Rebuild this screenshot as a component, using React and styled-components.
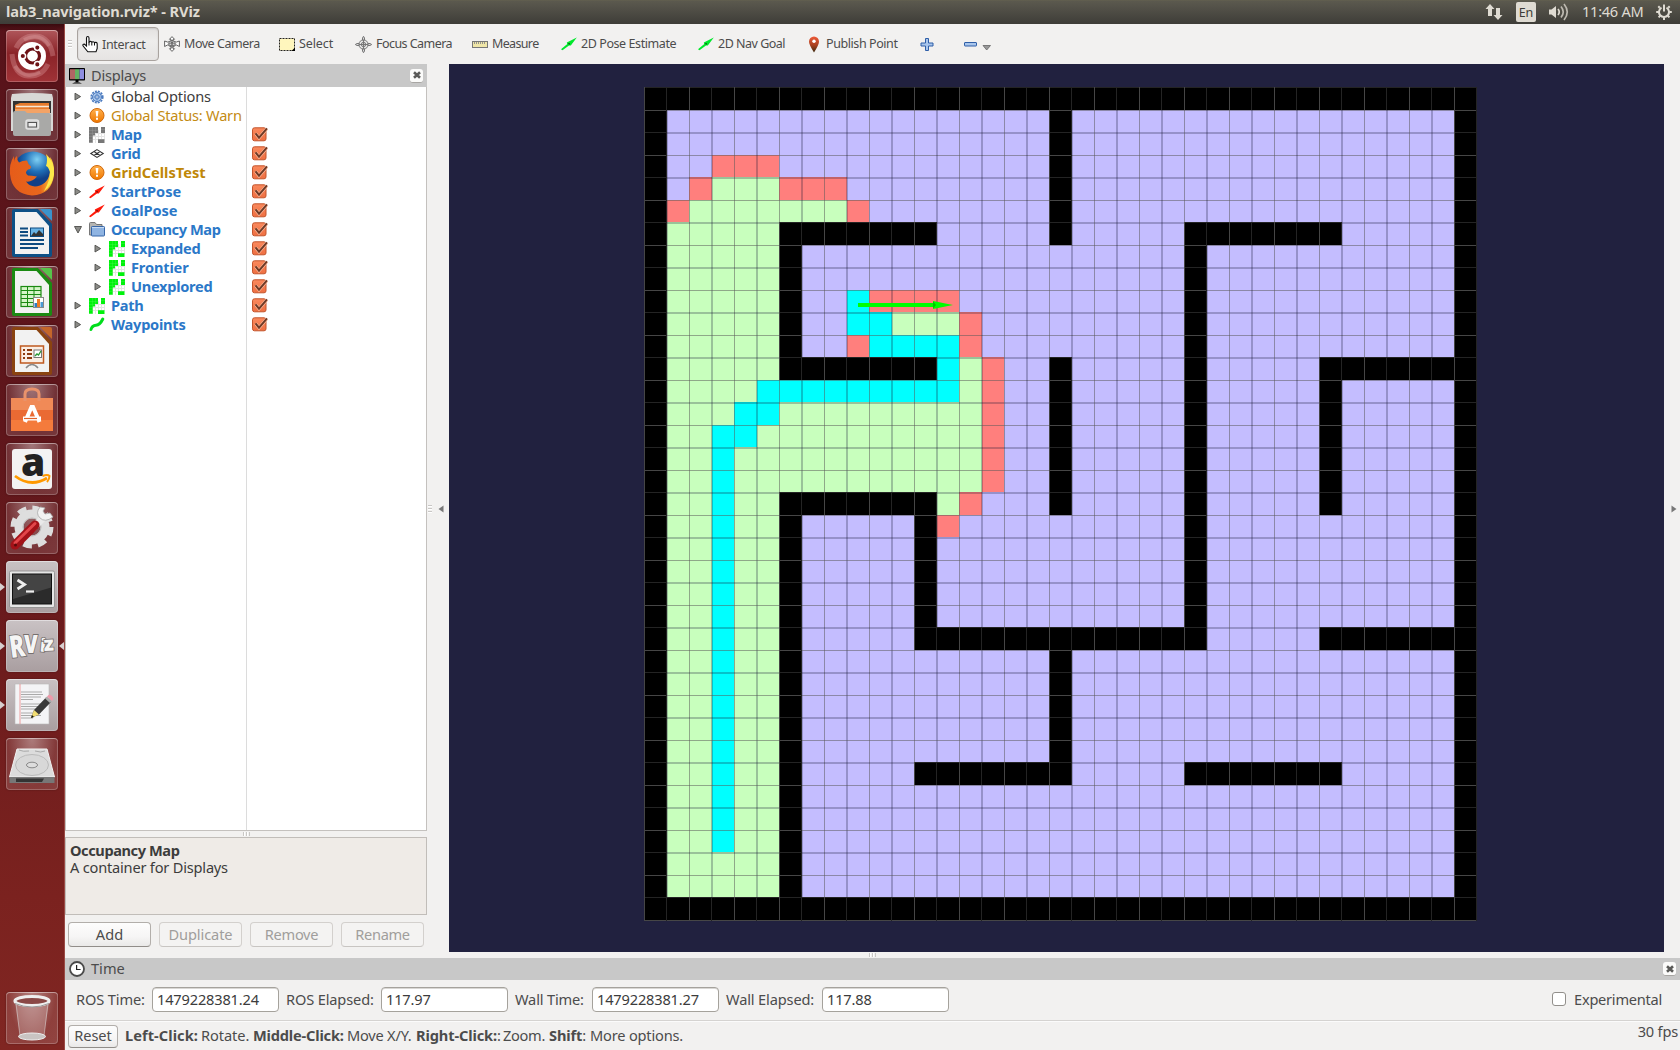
import React from "react";
import styled, { createGlobalStyle } from "styled-components";

const Global = createGlobalStyle`
  *{box-sizing:border-box}
  html,body{margin:0;padding:0;overflow:hidden}
  body{font-family:"Noto Sans","Open Sans",sans-serif;font-size:14.6px;color:#4c4c4c;background:#f2f1f0}
  svg{display:block;flex:none;overflow:visible}
`;

const Screen = styled.div`
  width:1680px;height:1050px;display:flex;flex-direction:column;overflow:hidden;
`;
const T = styled.span`
  display:block;white-space:pre;line-height:${(p) => p.$lh || 19}px;
  font-size:${(p) => p.$size || 14.6}px;
  font-weight:${(p) => (p.$bold ? 700 : 400)};
  letter-spacing:${(p) => p.$ls || 0}px;
  color:${(p) => p.$color || "#4c4c4c"};
  padding-bottom:${(p) => p.$lift || 0}px;
`;

/* ---------- top panel ---------- */
const TopPanel = styled.header`
  height:24px;flex:none;display:flex;align-items:center;justify-content:space-between;
  padding:0 7px 0 6px;
  background:linear-gradient(#65624f 0,#5b594e 1px,#55534a 6px,#3e3d38 100%);
`;
const Indicators = styled.div`display:flex;align-items:center;height:24px;`;
const Lang = styled.div`
  width:20px;height:20px;border-radius:2px;background:#dfdbd2;margin:0 12px 0 13px;
  display:flex;align-items:center;justify-content:center;
`;
const ClockText = styled.div`width:86px;padding-left:13px;`;
const Main = styled.div`flex:1;display:flex;min-height:0;`;

/* ---------- launcher ---------- */
const Launcher = styled.nav`
  width:65px;flex:none;padding:6px 0 6px 0;display:flex;flex-direction:column;gap:7px;
  background:linear-gradient(#3a0a0e 0,#58131a 7px,#5f161b 40%,#7b221f 85%,#802622 100%);
  border-right:1px solid #9a4a45;
`;
const Slot = styled.div`
  height:52px;flex:none;display:flex;align-items:center;
  margin-top:${(p) => (p.$last ? "auto" : "0")};
`;
const Arrow = styled.span`
  width:6px;height:0;flex:none;border-top:4px solid transparent;border-bottom:4px solid transparent;
  border-left:${(p) => (p.$show && !p.$right ? "5px solid #d8cfcf" : "0")};
  border-right:${(p) => (p.$show && p.$right ? "5px solid #d8cfcf" : "0")};
`;
const Tile = styled.div`
  width:52px;height:52px;border-radius:4px;
  background:${(p) =>
    p.$kind === "active"
      ? "linear-gradient(#c9c2c4,#a99ea0)"
      : p.$kind === "dash"
      ? "linear-gradient(#b0575b,#8a2328 45%,#a03337)"
      : "radial-gradient(ellipse at 50% 0,rgba(255,255,255,.42),rgba(255,255,255,.12) 65%,rgba(255,255,255,.14))"};
  box-shadow:inset 0 0 0 1px rgba(255,255,255,.22),inset 0 1px 0 rgba(255,255,255,.3),0 0 2px rgba(0,0,0,.35);
`;

/* ---------- window ---------- */
const Win = styled.main`flex:1;display:flex;flex-direction:column;min-width:0;background:#f2f1f0;`;
const Toolbar = styled.div`height:40px;flex:none;display:flex;align-items:center;padding-left:3px;`;
const Grip = styled.i`
  display:block;flex:none;
  width:${(p) => (p.$v ? 7 : 4)}px;height:${(p) => (p.$v ? 4 : 8)}px;
  background:repeating-linear-gradient(${(p) => (p.$v ? "90deg" : "180deg")},#c9c7c5 0 1px,#fff 1px 2px,transparent 2px 3px);
`;
const Interact = styled.button`
  width:82px;height:34px;margin:0 5px 0 5px;padding:0 0 0 4px;display:flex;align-items:center;gap:3px;
  font:inherit;border:1px solid #a9a39f;border-radius:4px;
  background:linear-gradient(#e3e1e0,#eeedec 40%,#e6e4e3);box-shadow:inset 0 1px 2px rgba(0,0,0,.12);
`;
const Tool = styled.div`width:${(p) => p.$w}px;flex:none;display:flex;align-items:center;gap:4px;`;
const Split = styled.div`height:888px;flex:none;display:flex;`;
const DockCol = styled.aside`width:362px;flex:none;display:flex;flex-direction:column;`;
const DockHead = styled.div`
  height:${(p) => p.$h}px;flex:none;background:#c8c8c8;display:flex;align-items:center;padding:0 4px;gap:6px;
`;
const Close = styled.span`
  margin-left:auto;width:13px;height:14px;border-radius:3px;background:#fbfbfa;
  border-bottom:1px solid #a8a6a3;display:flex;align-items:center;justify-content:center;
`;
const Tree = styled.div`
  height:744px;flex:none;background:#fff;border:1px solid #c4c1be;border-top:0;display:flex;
`;
const TreeNames = styled.div`width:181px;border-right:1px solid #dcdcdc;`;
const TreeRow = styled.div`
  height:19px;display:flex;align-items:center;padding-left:${(p) => 8 + (p.$depth || 0) * 20}px;
`;
const Expander = styled.span`width:15px;display:flex;`;
const IconBox = styled.span`width:16px;margin-right:6px;display:flex;justify-content:center;`;
const CheckCell = styled.div`height:19px;padding:0 0 0 5px;display:flex;align-items:center;`;
const HGrip = styled.div`height:6px;flex:none;display:flex;align-items:center;justify-content:center;`;
const Desc = styled.div`
  height:78px;flex:none;border:1px solid #c1bdb9;background:#efebe7;padding:4px 0 0 4px;
`;
const BtnRow = styled.div`display:flex;gap:8px;padding:7px 0 0 3px;`;
const Btn = styled.button`
  width:${(p) => p.$w}px;height:${(p) => p.$h || 25}px;padding:0;font:inherit;display:flex;align-items:center;justify-content:center;
  border:1px solid ${(p) => (p.disabled ? "#d3d0cd" : "#b2aeaa")};
  border-bottom-color:${(p) => (p.disabled ? "#c8c5c2" : "#918d89")};
  border-radius:4px;
  background:${(p) => (p.disabled ? "#f4f3f2" : "linear-gradient(#fdfdfd,#f6f5f5 60%,#eae9e8)")};
`;
const Handle = styled.div`width:22px;flex:none;display:flex;align-items:center;padding:1px 0 0 1px;gap:6px;`;
const RightHandle = styled.div`flex:1;display:flex;align-items:center;padding:1px 0 0 7px;`;
const Viewport = styled.div`width:1215px;height:888px;flex:none;background:#21213f;`;
const TimeBody = styled.div`
  height:41px;flex:none;display:flex;align-items:center;padding:0 18px 2px 11px;border-bottom:1px solid #d5d3d1;
`;
const Lab = styled.div`width:${(p) => p.$w}px;flex:none;`;
const Field = styled.div`
  width:127px;height:25px;flex:none;margin-right:7px;border:1px solid #a5a29c;border-radius:4px;background:#fff;
  display:flex;align-items:center;padding-left:4px;box-shadow:inset 0 1px 0 #d9d7d4;
`;
const Box = styled.span`
  width:14px;height:14px;border:1px solid #928f8b;border-radius:3px;background:#fff;margin:0 8px 0 auto;
`;
const Status = styled.footer`
  flex:1;display:flex;align-items:center;padding:0 2px 0 3px;border-top:1px solid #fbfbfb;
`;
const Hints = styled.div`display:flex;margin-left:7px;`;
const Fps = styled.div`margin-left:auto;align-self:flex-start;`;

/* ---------- small icons ---------- */
const Hand = () => (
  <svg width="17" height="17" viewBox="0 0 17 17">
    <path d="M4.5 10V2q0-1.5 1.2-1.5T7 2v4.5q.3-1.2 1.5-1.1T9.8 6.600q.3-1 1.400-.9t1.300 1.300q.4-.8 1.500-.6t1.200 1.300v4.800L14 15.800H5.800L1 9.800q-.4-1.300.6-1.600t1.700.8z" fill="#fff" stroke="#111" strokeWidth="1.100" />
    <path d="M7 6v3.500M9.800 6.500v3M12.500 7v2.500" stroke="#111" />
  </svg>
);
const MoveCam = () => (
  <svg width="16" height="16" viewBox="0 0 16 16" fill="#fff" stroke="#555" strokeWidth=".9">
    <path d="M8 .6 5.500 3.300H7v2H9v-2h1.500zM8 15.400l2.500-2.700H9v-2H7v2H5.500zM.6 5v5.500L3.500 9l2 .3M15.400 5v5.500L12.500 9l-2 .3M.6 5l3 1 2.500-.5M15.400 5l-3 1L10 5.500" />
    <circle cx="8" cy="7.800" r="3.300" /><path d="M5 7.800h6M8 4.500v6.500M6 5.800q2 1.500 4 0M6 9.800q2-1.500 4 0" />
  </svg>
);
const SelectIcon = () => (
  <svg width="16" height="13" viewBox="0 0 16 13">
    <rect x=".5" y=".5" width="15" height="12" fill="#fff6bd" stroke="#222" strokeDasharray="2 1" />
    <path d="M16 9.500V13H12.500z" fill="#000" />
  </svg>
);
const FocusIcon = () => (
  <svg width="17" height="17" viewBox="0 0 17 17" fill="none" stroke="#777" strokeWidth="1">
    <circle cx="8.500" cy="8.500" r="4.600" fill="#e4e4e4" /><circle cx="8.500" cy="8.500" r="2.200" />
    <path d="M8.500 3v11M3 8.500h11" />
    <path d="M7.500 4V2L8.500.3 9.500 2v2zM7.500 13v2l1 1.700 1-1.700v-2zM4 7.500H2L.3 8.500 2 9.500h2zM13 7.500h2l1.700 1-1.700 1h-2z" fill="#ddd" />
  </svg>
);
const Ruler = () => (
  <svg width="16" height="7" viewBox="0 0 16 7">
    <rect x=".5" y=".5" width="15" height="6" fill="#efe6a8" stroke="#777" />
    <path d="M2.500 1v2M4.500 1v2M6.500 1v2M8.500 1v2M10.500 1v2M12.500 1v2" stroke="#888" strokeWidth=".9" />
  </svg>
);
const Pose = ({ c = "#00e82b", d = "#0a5c14" }) => (
  <svg width="16" height="14" viewBox="0 0 16 14">
    <path d="M0 12.200 6.300 7 5.800 5.500 15.800.5 9.800 8.600 8 8.500 1.500 13.200z" fill={c} />
    <path d="M6.500 6.500 9 6 8.500 8z" fill={d} />
  </svg>
);
const Pin = () => (
  <svg width="16" height="17" viewBox="0 0 16 17">
    <defs><linearGradient id="pin" x2="0" y2="1"><stop offset="0" stopColor="#ee5a38" /><stop offset=".55" stopColor="#a8401f" /><stop offset="1" stopColor="#3a2a10" /></linearGradient></defs>
    <path d="M8 .5a5 5 0 0 1 5 5.200Q13 8.500 8 16.500 3 8.500 3 5.700A5 5 0 0 1 8 .5z" fill="url(#pin)" /><circle cx="8" cy="5.300" r="1.700" fill="#fff" />
  </svg>
);
const Plus = () => (
  <svg width="14" height="13" viewBox="0 0 14 13">
    <path d="M5.500.5h3v4.500h4.500v3H8.500v4.500h-3V8H1V5h4.500z" fill="#a9c6ec" stroke="#2f5fa8" />
  </svg>
);
const Minus = () => (
  <svg width="13" height="5" viewBox="0 0 13 5"><rect x=".5" y=".5" width="12" height="3.500" rx=".5" fill="#a9c6ec" stroke="#2f5fa8" /></svg>
);
const Monitor = () => (
  <svg width="16" height="16" viewBox="0 0 16 16">
    <rect width="16" height="12.500" rx=".8" fill="#000" />
    <rect x="1" y="1.200" width="5" height="10" fill="#b06464" /><rect x="6" y="1.200" width="4.500" height="10" fill="#63b063" /><rect x="10.500" y="1.200" width="4.500" height="10" fill="#8e8ee0" />
    <path d="M6.500 12h3v2h-3z" /><path d="M3 15.400q5-2.400 10 0z" />
  </svg>
);
const Clock = () => (
  <svg width="16" height="16" viewBox="0 0 16 16">
    <circle cx="8" cy="8" r="7" fill="#fff" stroke="#4a4a4a" strokeWidth="1.800" /><path d="M7.600 4v4.500h4" fill="none" stroke="#222" strokeWidth="1.200" />
  </svg>
);
const Cross = () => (
  <svg width="8" height="8" viewBox="0 0 8 8"><path d="M1 1.200 7 6.800M7 1.200 1 6.800" stroke="#5a5a58" strokeWidth="2.600" /></svg>
);
const Gear = () => (
  <svg width="14" height="14" viewBox="0 0 14 14" fill="none">
    <circle cx="7" cy="7" r="5.700" stroke="#4a7abf" strokeWidth="1.800" strokeDasharray="2 1" />
    <circle cx="7" cy="7" r="4.500" fill="#a6c4ea" stroke="#4a7abf" /><circle cx="7" cy="7" r="2" fill="#fff" stroke="#4a7abf" /><path d="M7 3.500v7M3.500 7h7" stroke="#4a7abf" strokeWidth=".6" />
  </svg>
);
const Warn = () => (
  <svg width="16" height="16" viewBox="0 0 16 16">
    <defs><linearGradient id="wn" x2="0" y2="1"><stop offset="0" stopColor="#ffb04d" /><stop offset="1" stopColor="#f07800" /></linearGradient></defs>
    <circle cx="8" cy="7.500" r="7" fill="url(#wn)" stroke="#d2680a" /><path d="M6.600 3h2.800L8.800 8.500H7.200zM7 9.700h2v2H7z" fill="#fff" />
  </svg>
);
const MapIcon = ({ c = "#00f20c", l = "#e4e4e4" }) => (
  <svg width="16" height="16" viewBox="0 0 16 16">
    <path d="M3.500 8v8M6.500 3v13M9.500 3v13M12.500 3v13M3 9.500h13M3 12.500h13M6 6.500h10M15.500 5v8" stroke={l} />
    <path d="M0 0h9v6H6v2.500H3.700v7.300H0zM12 0h4v6h-4zM9 12.200h6.500V16H9z" fill={c} />
    <path d="M3.500 0v8M6.500 0v6M0 3.500h9M0 6.500h6M0 9.500h3M0 12.500h3M12 2.500h4" stroke="#fff" strokeWidth=".3" opacity=".35" />
  </svg>
);
const GridIcon = () => (
  <svg width="14" height="9" viewBox="0 0 14 9" fill="none" stroke="#333" strokeWidth="1.100">
    <path d="M7 .6 13.200 4.500 7 8.400.8 4.500zM3.900 2.500l6.200 3.900M10.100 2.500 3.900 6.400" />
  </svg>
);
const Folder = () => (
  <svg width="16" height="15" viewBox="0 0 16 15">
    <path d="M.5 1.500q0-1 1-1H6l1.500 2h5.500V13H.5z" fill="#b5b5b2" stroke="#777" />
    <rect x="2.500" y="4.500" width="13" height="9.500" rx=".8" fill="#8fb4e2" stroke="#3766a8" /><path d="M3 5.500h12" stroke="#c7dbf3" />
  </svg>
);
const Wave = () => (
  <svg width="16" height="15" viewBox="0 0 16 15"><path d="M2 12.500Q3 8.500 7 8.200T13.800 2" fill="none" stroke="#00dd1c" strokeWidth="3" strokeLinecap="round" /></svg>
);
const Check = () => (
  <svg width="16" height="16" viewBox="0 0 16 16">
    <defs><linearGradient id="ck" x2="0" y2="1"><stop offset="0" stopColor="#fa8a5e" /><stop offset="1" stopColor="#ee6f42" /></linearGradient></defs>
    <rect x=".5" y=".8" width="13.500" height="13" rx="2" fill="url(#ck)" stroke="#c4552c" />
    <path d="M3.500 6.400 7 10.700 14.800 1.800" fill="none" stroke="#ffc0a3" strokeWidth="3.200" /><path d="M3.500 6.400 7 10.700 15 1.400" fill="none" stroke="#6f3a26" strokeWidth="2" />
  </svg>
);
const TriR = ({ open }) => (
  <svg width="8" height="8" viewBox="0 0 8 8">
    <path d={open ? "M.5 .5h7L4 7z" : "M1 .2v6.800L6.600 3.600z"} fill="#8c8c88" stroke="#4d4d4a" strokeWidth=".9" />
  </svg>
);

/* ---------- launcher icons ---------- */
const I = ({ children }) => <svg width="52" height="52" viewBox="0 0 52 52">{children}</svg>;
const Office = ({ a, b, children }) => (
  <>
    <path d="M6 4q0-2 2-2h24L46 17v31q0 2-2 2H8q-2 0-2-2z" fill={a} />
    <path d="M34 2h10q2 0 2 2v10z" fill={b} />
    <path d="M9 5h21.500L43 19v28H9z" fill="#f2f2f2" />
    {children}
  </>
);
const Dash = () => (
  <I>
    <path d="M10 18Q16 5 30 6t17 20M42 34Q36 47 22 46T6 24" fill="none" stroke="#e2a0a2" strokeOpacity=".35" strokeWidth="5" />
    <path d="M18 10Q34 2 43 16M34 42Q18 50 9 36" fill="none" stroke="#f0c0c0" strokeOpacity=".25" strokeWidth="4" />
    <circle cx="26" cy="26" r="14" fill="#fff" />
    <circle cx="26.500" cy="26" r="7" fill="none" stroke="#6d1216" strokeWidth="3.200" />
    <g stroke="#fff" strokeWidth="1.500" fill="#6d1216"><circle cx="16.800" cy="26" r="2.800" /><circle cx="31.300" cy="17.600" r="2.800" /><circle cx="31.300" cy="34.400" r="2.800" /></g>
  </I>
);
const Files = () => (
  <I>
    <path d="M6 5q20-2 40 0l1 4v33H5V9z" fill="#d8d8d6" /><path d="M7 12h38v12H7z" fill="#333" />
    <path d="M9 16l5-2h29v12H9z" fill="#e77a2b" /><path d="M10 17.500h33" stroke="#f7e7d5" strokeWidth="1.500" />
    <path d="M9 20h35v4H9z" fill="#f3a366" />
    <path d="M7 24q0-2 2-2h10l2 2h22q2 0 2 2v19q0 2-2 2H9q-2 0-2-2z" fill="#a9a9a7" />
    <rect x="20" y="31" width="12.500" height="9" rx="2" fill="#ccc" stroke="#e2e2e2" strokeWidth="1.500" /><rect x="22" y="33.500" width="8.500" height="4.500" fill="#eee" stroke="#555" />
  </I>
);
const Firefox = () => (
  <I>
    <defs><radialGradient id="ffb" cx=".6" cy=".2"><stop offset="0" stopColor="#7fd0f3" /><stop offset=".6" stopColor="#1f6fb8" /><stop offset="1" stopColor="#123f86" /></radialGradient>
      <linearGradient id="ffo" x2="1"><stop offset="0" stopColor="#e65c1a" /><stop offset=".7" stopColor="#e8671c" /><stop offset="1" stopColor="#fbd43a" /></linearGradient></defs>
    <circle cx="27" cy="23.500" r="20" fill="url(#ffb)" />
    <path d="M8 8q-5 8-4 18 2 20 22 21.500 20-1 22-21Q48.500 14 44 9q1 6 0 10 1 14-10 18.500-9 3-14-4 6 1 11-5-6-1-9-1-4-3 0-6 3 0 3-3-3-2-4-6-5 0-8 2-2-2-2-6.500-3 2-3 6.500z" fill="url(#ffo)" />
    <path d="M40 6q9 8 8 20-2 12-10 17 6-10 6-19-2-6-4-6 2-6 0-12z" fill="#fce94a" />
  </I>
);
const Writer = () => (
  <I><Office a="#0d5086" b="#3a93cb">
    <path d="M14 21.500h8M14 25h8M14 28.500h8M14 33h24M14 37h24M14 41h18" stroke="#0d4a80" strokeWidth="2" />
    <rect x="24.500" y="21" width="13" height="8.500" fill="#67b2e4" stroke="#0d4a80" /><path d="M25 29l3-4 2 2 3-4 4 4v2z" fill="#333" />
  </Office></I>
);
const Calc = () => (
  <I><Office a="#1b8a12" b="#57c34a">
    <rect x="15" y="20.500" width="20" height="20" fill="#d5f5c8" stroke="#1b8a12" strokeWidth="1.200" />
    <path d="M15 24.500h20M15 28.500h20M15 32.500h20M15 36.500h20M21.500 20v20M28 20v20" stroke="#1b8a12" strokeWidth="1" />
    <rect x="27.500" y="31.500" width="10" height="10" fill="#fff" stroke="#888" /><path d="M28.500 37h2.500v4h-2.500z" fill="#2a7dc1" /><path d="M31 33h3v8h-3z" fill="#ee7b23" /><path d="M34.500 36h2.500v5h-2.500z" fill="#4b9ad5" />
  </Office></I>
);
const Impress = () => (
  <I><Office a="#8a4310" b="#c4662a">
    <rect x="14.500" y="21" width="23" height="17" fill="#fbeee4" stroke="#bf5a20" strokeWidth="1.500" />
    <path d="M17 25h2M17 29h2M17 33h2M21 25h5M21 29h5M21 33h5" stroke="#8f3c10" strokeWidth="2" /><rect x="28" y="25" width="7.500" height="7.500" fill="#fff" stroke="#777" /><path d="M29 31l2-2 1.500 1 2.500-4" stroke="#2d9a36" fill="none" strokeWidth="1.400" /><path d="M20 43q6-7 12 0" stroke="#888" fill="none" strokeWidth="1.500" />
  </Office></I>
);
const Software = () => (
  <I>
    <path d="M5 14h42v33H5z" fill="#ea6a33" /><path d="M5 14h42v12H5z" fill="#f08a57" /><path d="M5 36h42v11H5z" fill="#f47b3c" />
    <path d="M19 17V10q0-5 7-5t7 5v7" fill="none" stroke="#e9926b" strokeWidth="3" />
    <path d="M19 38l6.500-15h1.500L33.500 38M17 34.500h18" fill="none" stroke="#fff" strokeWidth="4" />
    <path d="M18 34.500h13" stroke="#e2622a" strokeWidth="1.200" />
  </I>
);
const Letter = styled.text`
  font-family:"Open Sans","Noto Sans",sans-serif;font-weight:800;
`;
const Amazon = () => (
  <I>
    <rect x="6" y="6" width="40" height="40" rx="3" fill="#f3f3f3" />
    <Letter x="15" y="33" fontSize="39" fill="#222">a</Letter>
    <path d="M9 33q16 12 32 2" fill="none" stroke="#ff9900" strokeWidth="2.800" /><path d="M36.500 33q5-2 7 0 0 3-2.500 6" fill="none" stroke="#ff9900" strokeWidth="2" />
  </I>
);
const Settings = () => (
  <I>
    <circle cx="26" cy="25" r="18.500" fill="none" stroke="#ddd" strokeWidth="6" strokeDasharray="8.500 6" />
    <circle cx="26" cy="25" r="13" fill="none" stroke="#dedede" strokeWidth="9" /><circle cx="26" cy="25" r="9" fill="none" stroke="#bbb" strokeWidth="1" />
    <path d="M26 27 38 15" stroke="#e9e9e9" strokeWidth="7" /><path d="M34 5q-5 6 0 11 5 5 13-1l-3-4-5 1-2-3 2-3z" fill="#f2f2f2" stroke="#aaa" strokeWidth=".8" />
    <path d="M9 43 29 23" stroke="#a31218" strokeWidth="9" strokeLinecap="round" /><path d="M9 41 29 21.500" stroke="#e2464a" strokeWidth="3" strokeLinecap="round" /><circle cx="9.500" cy="43" r="1.500" fill="#5a0a0a" />
  </I>
);
const Terminal = () => (
  <I>
    <rect x="3.500" y="10" width="45" height="36.500" rx="1.500" fill="#e6e6e6" stroke="#888" strokeWidth=".8" /><rect x="6.500" y="13" width="39" height="30" fill="#2b2b2b" stroke="#111" /><path d="M7 13.500h38v13L7 38z" fill="#fff" opacity=".12" />
    <path d="M11.500 19l7 4.500-7 4.500" fill="none" stroke="#eee" strokeWidth="2.800" /><path d="M20 30.500h8" stroke="#eee" strokeWidth="2.200" />
  </I>
);
const Logo = styled.text`
  font-family:"Open Sans","Noto Sans",sans-serif;font-weight:800;fill:#f5f5f5;stroke:#77706f;stroke-width:1.6px;paint-order:stroke;
`;
const RvizIcon = () => (
  <I>
    <g transform="translate(5 38) rotate(-8) scale(.8 1.100)"><Logo fontSize="28">R</Logo></g>
    <g transform="translate(18 33) scale(.9 1.150)"><Logo fontSize="22">V</Logo></g>
    <g transform="translate(33.500 31.500) rotate(5)"><Logo fontSize="18">i</Logo></g>
    <g transform="translate(38 31) rotate(-3)"><Logo fontSize="20">z</Logo></g>
  </I>
);
const Editor = () => (
  <I>
    <path d="M9 5h34v40H9z" fill="#f4f4f6" stroke="#bbb" strokeWidth=".6" /><path d="M14 5v40" stroke="#e88" strokeWidth=".8" />
    <path d="M15 13h21M15 15.500h22M15 18h20M15 20.500h12M15 25h22M15 27.500h20M15 30h16M15 34h14M15 36.500h20M15 39h12" stroke="#aaa" strokeWidth="1" />
    <path d="M25 39 28 31 40 18.500 45 23 33 35.500z" fill="#3a3a3a" /><path d="M25 39l3-8 5 4.500z" fill="#f1dd72" /><path d="M25 39l1-3 2 2z" fill="#111" /><path d="M39 19.500l2-2 5 4.500-2 2z" fill="#aaa" /><path d="M41 17.500l2-1.800q3 0 4.500 4L46 22z" fill="#e9a" />
  </I>
);
const Disk = () => (
  <I>
    <path d="M11 11h30l7.500 28H3.500z" fill="#dcdcdc" stroke="#f2f2f2" /><path d="M3.500 39h45v6H3.500z" fill="#777" /><path d="M10 40.500h28l-2 3.500H10z" fill="#333" />
    <ellipse cx="26" cy="27" rx="16.500" ry="10.500" fill="#d8d8d8" stroke="#bbb" /><ellipse cx="26" cy="27" rx="5.500" ry="2.800" fill="#ddd" stroke="#888" /><path d="M13 12q4 2 10 1M29 13q6 2 10 0" stroke="#aaa" fill="none" />
  </I>
);
const Trash = () => (
  <I>
    <path d="M9 10 14 44q12 6 24 0L43 10z" fill="#fff" opacity=".22" /><path d="M10 11 14 44M42 11 38 44" stroke="#ddd" strokeOpacity=".5" />
    <ellipse cx="26" cy="44.500" rx="13.500" ry="3.500" fill="#c9c4c2" stroke="#eee" />
    <ellipse cx="26" cy="9" rx="17" ry="4.500" fill="#8a4846" stroke="#eee" strokeWidth="3.200" /><path d="M9 11.500q17 7 34 0" fill="none" stroke="#999" strokeWidth="1" />
  </I>
);

const APPS = [
  [Dash, "dash"], [Files], [Firefox], [Writer], [Calc], [Impress], [Software], [Amazon], [Settings],
  [Terminal, "active", true], [RvizIcon, "active", true, true], [Editor, "active", true], [Disk],
];

/* ---------- occupancy map ---------- */
const N = 37;
const gx = (k) => 644 + Math.floor(22.5 * k);
const gy = (k) => 87 + Math.ceil(22.5 * k);
const cx = (k) => (k === N ? gx(k) + 1 : 644 + Math.ceil(22.5 * k));
const cy = (k) => (k === N ? gy(k) + 1 : gy(k));
/* runs are [col, row, width, height] in cells */
const WALLS = [
  [0, 0, 37, 1], [0, 36, 37, 1], [0, 0, 1, 37], [36, 0, 1, 37],
  [6, 6, 7, 1], [6, 6, 1, 7], [6, 12, 7, 1], [18, 1, 1, 6], [18, 12, 1, 7], [18, 25, 1, 6],
  [24, 6, 1, 19], [24, 6, 7, 1], [30, 12, 7, 1], [30, 12, 1, 7], [12, 24, 13, 1], [30, 24, 7, 1],
  [6, 18, 7, 1], [6, 18, 1, 19], [12, 18, 1, 7], [12, 30, 7, 1], [24, 30, 7, 1],
];
const EXPANDED = [
  [3, 4, 3, 1], [2, 5, 7, 1], [1, 6, 5, 30], [6, 13, 9, 5], [14, 12, 1, 1], [13, 18, 1, 1], [11, 10, 3, 1],
];
const FRONTIER = [
  [3, 3, 3, 1], [2, 4, 1, 1], [6, 4, 3, 1], [1, 5, 1, 1], [9, 5, 1, 1], [10, 9, 4, 1], [14, 10, 1, 2],
  [9, 11, 1, 1], [15, 12, 1, 6], [14, 18, 1, 1], [13, 19, 1, 1],
];
const PATH = [
  [9, 9, 1, 1], [9, 10, 2, 1], [10, 11, 4, 1], [13, 12, 1, 1], [5, 13, 9, 1], [4, 14, 2, 1], [3, 15, 2, 1], [3, 16, 1, 18],
];
const Cells = ({ runs, fill }) =>
  runs.map(([c, r, w, h], i) => (
    <rect key={i} x={cx(c)} y={cy(r)} width={cx(c + w) - cx(c)} height={cy(r + h) - cy(r)} fill={fill} />
  ));
const lines = Array.from({ length: N + 1 }, (_, k) => k);
const FAINT = "rgba(20,20,50,.26)";
const FIRM = "rgba(88,88,88,.52)";

const OccupancyMap = () => (
  <svg width="1215" height="888" viewBox="449 64 1215 888" shapeRendering="crispEdges">
    <defs><clipPath id="walls"><Cells runs={WALLS} /></clipPath></defs>
    <rect x={gx(0)} y={gy(0)} width={832} height={833} fill="#c4bdff" />
    <Cells runs={EXPANDED} fill="#c8ffbd" />
    <Cells runs={FRONTIER} fill="#ff7f7d" />
    <Cells runs={PATH} fill="#00ffff" />
    {lines.slice(1, N).map((k) => (
      <g key={k}>
        <rect x={gx(k)} y={gy(0)} width={k % 2 ? 2 : 1} height="833" fill={k % 2 ? FAINT : FIRM} />
        <rect x={gx(0)} y={gy(k)} width="832" height={k % 2 ? 1 : 2} fill={k % 2 ? FIRM : FAINT} />
      </g>
    ))}
    <Cells runs={WALLS} fill="#000" />
    <g clipPath="url(#walls)">
      {lines.map((k) => (
        <rect key={k} x={gx(0)} y={gy(k)} width="833" height="1" fill={k % 2 ? "#464646" : "#242424"} />
      ))}
      {lines.map((k) => (
        <rect key={k} x={gx(k)} y={gy(0)} width="1" height="834" fill={k % 2 ? "#242424" : "#464646"} />
      ))}
    </g>
    <g fill="#00ff00" shapeRendering="auto">
      <rect x="858" y="303" width="76" height="4" />
      <path d="M933 301 953 305 933 309z" />
      <path d="M933 301.500v7l3-3.500z" fill="#00c400" />
    </g>
  </svg>
);

/* ---------- data ---------- */
const BLUE = "#2b78c8";
const ROWS = [
  ["Global Options", Gear, "#3c3c3c", -0.16, 0, false],
  ["Global Status: Warn", Warn, "#c48b14", -0.22, 0, false],
  ["Map", () => <MapIcon c="#777" />, BLUE, -0.4, 0, true],
  ["Grid", GridIcon, BLUE, -0.3, 0, true],
  ["GridCellsTest", Warn, "#c08708", 0, 0, true],
  ["StartPose", () => <Pose c="#ff1a0a" d="#801008" />, BLUE, 0, 0, true],
  ["GoalPose", () => <Pose c="#ff1a0a" d="#801008" />, BLUE, -0.06, 0, true],
  ["Occupancy Map", Folder, BLUE, -0.42, 0, true],
  ["Expanded", MapIcon, BLUE, -0.22, 1, true],
  ["Frontier", MapIcon, BLUE, -0.16, 1, true],
  ["Unexplored", MapIcon, BLUE, -0.28, 1, true],
  ["Path", MapIcon, BLUE, -0.3, 0, true],
  ["Waypoints", Wave, BLUE, -0.25, 0, true],
];
const TOOLS = [
  ["Move Camera", MoveCam, 115, -0.46], ["Select", SelectIcon, 76, -0.1], ["Focus Camera", FocusIcon, 117, -0.55],
  ["Measure", Ruler, 89, -0.65], ["2D Pose Estimate", Pose, 137, -0.42], ["2D Nav Goal", Pose, 108, -0.5],
  ["Publish Point", Pin, 114, -0.42],
];
const TIMES = [
  ["ROS Time:", 76, "1479228381.24", -0.12], ["ROS Elapsed:", 95, "117.97", -0.14],
  ["Wall Time:", 77, "1479228381.27", -0.17], ["Wall Elapsed:", 96, "117.88", -0.14],
];
const HINTS = [
  ["Left-Click:", "", 76, 0.06, "Rotate.", 52, -0.06],
  ["Middle-Click:", "", 94, -0.18, "Move X/Y.", 69, -0.22],
  ["Right-Click:", ":", 87, -0.12, "Zoom.", 46, -0.3],
  ["Shift", ":", 41, -0.15, "More options.", 94, -0.18],
];

export default function App() {
  return (
    <Screen>
      <Global />
      <TopPanel>
        <T $bold $color="#dfdbd2" $ls={-0.08} $lift={1}>lab3_navigation.rviz* - RViz</T>
        <Indicators>
          <svg width="18" height="18" viewBox="0 0 18 18" fill="#dfdbd2"><path d="M5 1 .5 6H3v7h4V6h2.500zM13 17l4.500-5H15V5h-4v7H8.500z" /></svg>
          <Lang><T $size={12.5} $color="#3c3b37">En</T></Lang>
          <svg width="21" height="18" viewBox="0 0 21 18" fill="none" stroke="#dfdbd2" strokeWidth="1.700">
            <path d="M1 6.500h2.500L8 3v12L3.500 11.500H1z" fill="#dfdbd2" stroke="none" />
            <path d="M10 6q2.500 3 0 6" /><path d="M13 3.500q4.500 5.500 0 11" stroke="#bdb9b0" /><path d="M16 1q6.500 8 0 16" stroke="#bdb9b0" />
          </svg>
          <ClockText><T $color="#dfdbd2" $ls={-0.28} $lift={1}>11:46 AM</T></ClockText>
          <svg width="18" height="18" viewBox="0 0 18 18" fill="none" stroke="#dfdbd2" strokeWidth="2">
            <path d="M6.500 4.700a5 5 0 1 0 5 0M9 1.500v7" /><path d="M14 9h2.800M1.200 9H4M12.800 12.800l1.600 1.600M5.200 12.800l-1.600 1.600M9 14.500V17M13.300 4.700l1.400-1.400M4.700 4.700 3.300 3.300" />
          </svg>
        </Indicators>
      </TopPanel>
      <Main>
        <Launcher>
          {APPS.map(([Icon, kind, running, focused], i) => (
            <Slot key={i}><Arrow $show={running} /><Tile $kind={kind}><Icon /></Tile><Arrow $show={focused} $right /></Slot>
          ))}
          <Slot $last><Arrow /><Tile><Trash /></Tile></Slot>
        </Launcher>
        <Win>
          <Toolbar>
            <Grip />
            <Interact><Hand /><T $size={12.5} $ls={-0.3}>Interact</T></Interact>
            {TOOLS.map(([name, Icon, w, ls]) => (
              <Tool key={name} $w={w}><Icon /><T $size={12.5} $ls={ls} $lift={1}>{name}</T></Tool>
            ))}
            <Tool $w={44}><Plus /></Tool>
            <Tool $w={40}>
              <Minus />
              <svg width="12" height="13" viewBox="0 0 12 13"><path d="M2 7.500h7.500L5.700 12z" fill="#999" stroke="#666" strokeWidth=".8" /></svg>
            </Tool>
          </Toolbar>
          <Split>
            <DockCol>
              <DockHead $h={23}><Monitor /><T $ls={-0.22} $lift={1}>Displays</T><Close><Cross /></Close></DockHead>
              <Tree>
                <TreeNames>
                  {ROWS.map(([name, Icon, color, ls, depth, bold]) => (
                    <TreeRow key={name} $depth={depth}>
                      <Expander><TriR open={name === "Occupancy Map"} /></Expander>
                      <IconBox><Icon /></IconBox>
                      <T $bold={bold} $color={color} $ls={ls}>{name}</T>
                    </TreeRow>
                  ))}
                </TreeNames>
                <div>{ROWS.map((r) => <CheckCell key={r[0]}>{r[5] && <Check />}</CheckCell>)}</div>
              </Tree>
              <HGrip><Grip $v /></HGrip>
              <Desc>
                <T $lh={17} $bold $color="#3c3c3c" $ls={-0.42}>Occupancy Map</T>
                <T $lh={17} $color="#3c3c3c" $ls={-0.2}>A container for Displays</T>
              </Desc>
              <BtnRow>
                <Btn $w={83}><T>Add</T></Btn>
                <Btn $w={83} disabled><T $color="#a09e9c" $ls={-0.1}>Duplicate</T></Btn>
                <Btn $w={83} disabled><T $color="#a09e9c" $ls={-0.3}>Remove</T></Btn>
                <Btn $w={83} disabled><T $color="#a09e9c" $ls={-0.3}>Rename</T></Btn>
              </BtnRow>
            </DockCol>
            <Handle>
              <Grip />
              <svg width="6" height="8" viewBox="0 0 6 8"><path d="M5.500.5v7L.5 4z" fill="#777" /></svg>
            </Handle>
            <Viewport><OccupancyMap /></Viewport>
            <RightHandle>
              <svg width="6" height="8" viewBox="0 0 6 8"><path d="M.5.5v7L5.500 4z" fill="#777" /></svg>
            </RightHandle>
          </Split>
          <HGrip><Grip $v /></HGrip>
          <DockHead $h={22}><Clock /><T $lift={2}>Time</T><Close><Cross /></Close></DockHead>
          <TimeBody>
            {TIMES.map(([l, w, v, ls]) => (
              <React.Fragment key={l}>
                <Lab $w={w}><T $ls={ls}>{l}</T></Lab>
                <Field><T $color="#3c3c3c" $ls={-0.17}>{v}</T></Field>
              </React.Fragment>
            ))}
            <Box /><T $ls={-0.25}>Experimental</T>
          </TimeBody>
          <Status>
            <Btn $w={50} $h={23}><T $ls={-0.1} $lift={1}>Reset</T></Btn>
            <Hints>
              {HINTS.map(([key, tail, kw, kls, text, tw, tls]) => (
                <React.Fragment key={key}>
                  <Lab $w={kw}><T $ls={kls} $lift={2}><b>{key}</b>{tail}</T></Lab>
                  <Lab $w={tw}><T $ls={tls} $lift={2}>{text}</T></Lab>
                </React.Fragment>
              ))}
            </Hints>
            <Fps><T $ls={-0.2}>30 fps</T></Fps>
          </Status>
        </Win>
      </Main>
    </Screen>
  );
}
